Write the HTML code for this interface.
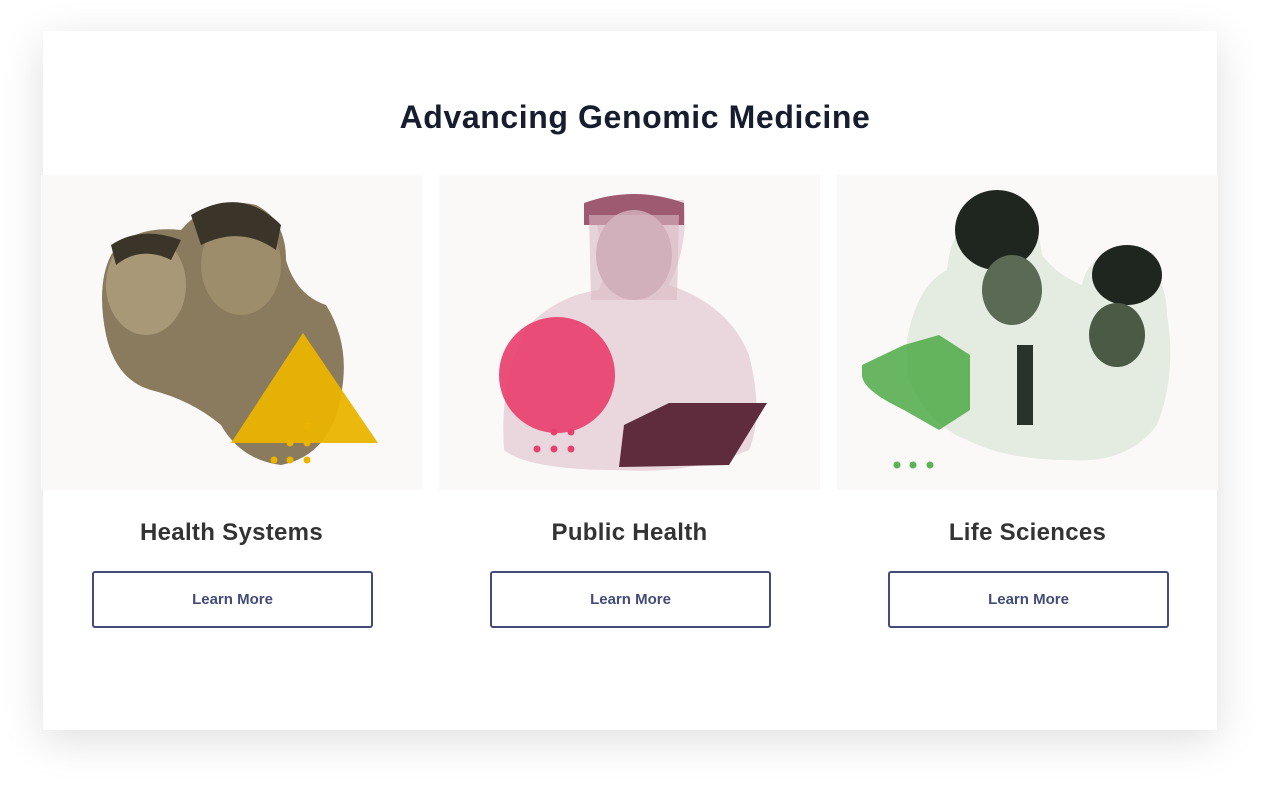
<!DOCTYPE html>
<html><head><meta charset="utf-8"><style>
html,body{margin:0;padding:0;background:#fff;width:1270px;height:792px;overflow:hidden;font-family:"Liberation Sans",sans-serif}
.card{position:absolute;left:43px;top:31px;width:1174px;height:699px;background:#fff;box-shadow:0 10px 40px rgba(0,0,0,0.13)}
h1{position:absolute;left:0;top:99px;width:1270px;text-align:center;margin:0;font-size:32px;font-weight:bold;color:#161d2e;letter-spacing:0.6px}
.panel{position:absolute;top:175px;width:381px;height:315px;background:#faf9f8;overflow:hidden}
.h{position:absolute;top:519px;width:381px;text-align:center;font-size:24px;font-weight:bold;color:#333;letter-spacing:0.3px}
.btn{position:absolute;top:571px;width:277px;height:53px;border:2px solid #434c78;border-radius:3px;box-sizing:content-box;text-align:center;line-height:54px;font-size:15px;font-weight:bold;color:#434c78}
</style></head><body>
<div class="card"></div>
<h1>Advancing Genomic Medicine</h1>

<div class="panel" style="left:41px">
<svg width="381" height="315">
<path d="M70 80 Q90 50 140 55 Q170 20 215 30 Q245 45 245 85 Q255 120 285 130 Q310 170 300 220 Q290 280 240 290 Q200 285 180 250 Q150 225 110 215 Q75 205 65 160 Q55 110 70 80Z" fill="#8a7b5e"/>
<ellipse cx="105" cy="110" rx="40" ry="50" fill="#a89878"/>
<ellipse cx="200" cy="90" rx="40" ry="50" fill="#9e8d6b"/>
<path d="M70 70 Q100 50 140 65 L130 85 Q100 70 75 90Z" fill="#3b3428"/>
<path d="M150 40 Q200 10 240 50 L235 75 Q200 50 160 70Z" fill="#3b3428"/>
<path d="M262 158 L337 268 L190 268Z" fill="#eab400" opacity="0.95"/>
<g fill="#eab400"><circle cx="266" cy="251" r="3.5"/><circle cx="249" cy="268" r="3.5"/><circle cx="266" cy="268" r="3.5"/><circle cx="233" cy="285" r="3.5"/><circle cx="249" cy="285" r="3.5"/><circle cx="266" cy="285" r="3.5"/></g>
</svg></div>

<div class="panel" style="left:439px">
<svg width="381" height="315">
<path d="M90 150 Q120 120 160 115 L170 85 Q150 40 160 25 L245 25 Q250 70 230 110 Q290 130 310 180 Q325 240 310 275 Q250 300 180 295 Q90 295 65 275 Q60 200 90 150Z" fill="#ead7dd"/>
<path d="M145 28 Q195 10 245 28 L245 50 L145 50Z" fill="#9e5a70"/>
<ellipse cx="195" cy="80" rx="38" ry="45" fill="#c9a2ae"/>
<path d="M150 40 L240 40 L238 125 L152 125Z" fill="#d8b9c3" opacity="0.6"/>
<path d="M185 250 L230 228 L328 228 L290 290 L180 292Z" fill="#5e2c3c"/>
<circle cx="118" cy="200" r="58" fill="#e8406e" opacity="0.92"/>
<g fill="#e8406e"><circle cx="115" cy="257" r="3.5"/><circle cx="132" cy="257" r="3.5"/><circle cx="98" cy="274" r="3.5"/><circle cx="115" cy="274" r="3.5"/><circle cx="132" cy="274" r="3.5"/></g>
</svg></div>

<div class="panel" style="left:837px">
<svg width="381" height="315">
<path d="M70 165 Q80 110 110 95 Q115 40 160 30 Q200 30 205 80 Q220 100 245 110 Q250 80 285 80 Q330 90 330 140 Q340 200 320 250 Q290 290 230 285 Q170 285 130 265 Q90 250 70 200Z" fill="#e4ebe1"/>
<ellipse cx="160" cy="55" rx="42" ry="40" fill="#1f261f"/>
<ellipse cx="290" cy="100" rx="35" ry="30" fill="#1f261f"/>
<ellipse cx="175" cy="115" rx="30" ry="35" fill="#5a6a55"/>
<ellipse cx="280" cy="160" rx="28" ry="32" fill="#4a5a45"/>
<rect x="180" y="170" width="16" height="80" fill="#2a332a"/>
<path d="M67 170 L102 160 L133 180 L133 235 L102 255 L67 235 Q25 215 25 200 L25 190Z" fill="#4daa46" opacity="0.85"/>
<g fill="#5bb355"><circle cx="60" cy="290" r="3.5"/><circle cx="76" cy="290" r="3.5"/><circle cx="93" cy="290" r="3.5"/></g>
</svg></div>

<div class="h" style="left:41px">Health Systems</div>
<div class="h" style="left:439px">Public Health</div>
<div class="h" style="left:837px">Life Sciences</div>
<div class="btn" style="left:92px">Learn More</div>
<div class="btn" style="left:490px">Learn More</div>
<div class="btn" style="left:888px">Learn More</div>
</body></html>
